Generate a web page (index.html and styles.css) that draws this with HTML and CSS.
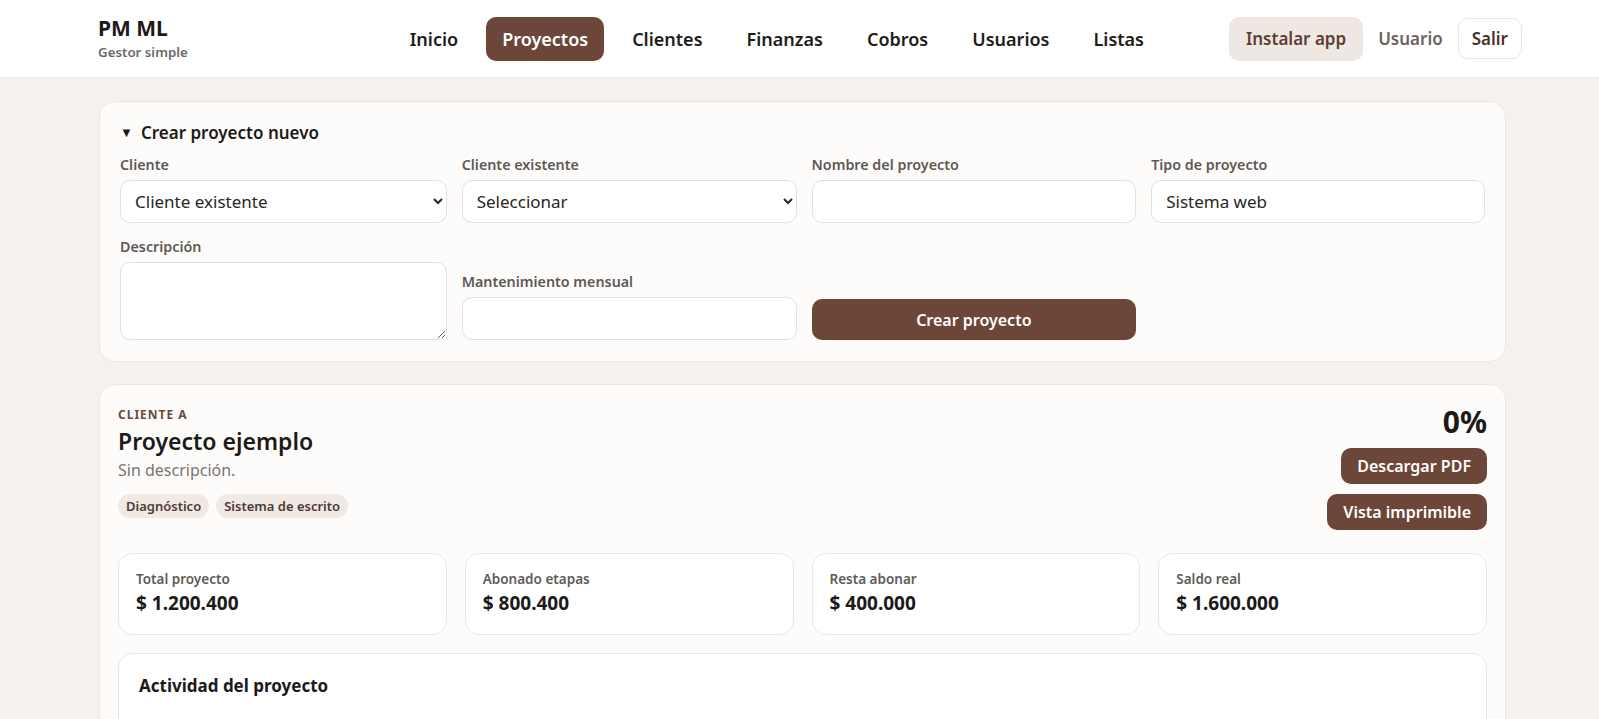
FILE: index.html
```html
<!DOCTYPE html>
<html lang="es">
<head>
  <meta charset="utf-8">
  <title>PM ML - Proyectos</title>
  <link rel="stylesheet" href="styles.css">
</head>
<body>
  <header class="topbar">
    <div class="brand">
      <div class="brand-name">PM ML</div>
      <div class="brand-sub">Gestor simple</div>
    </div>
    <nav class="nav">
      <a class="nav-link" href="#">Inicio</a>
      <a class="nav-link active" href="#">Proyectos</a>
      <a class="nav-link" href="#">Clientes</a>
      <a class="nav-link" href="#">Finanzas</a>
      <a class="nav-link" href="#">Cobros</a>
      <a class="nav-link" href="#">Usuarios</a>
      <a class="nav-link" href="#">Listas</a>
    </nav>
    <div class="user-area">
      <button class="install-btn">Instalar app</button>
      <span class="user-name">Usuario</span>
      <button class="logout-btn">Salir</button>
    </div>
  </header>

  <main class="page">
    <section class="card">
      <details class="new-project" open>
        <summary>Crear proyecto nuevo</summary>
        <form class="form-grid">
          <label class="field">
            <span class="field-label">Cliente</span>
            <select class="input">
              <option>Cliente existente</option>
            </select>
          </label>
          <label class="field">
            <span class="field-label">Cliente existente</span>
            <select class="input">
              <option>Seleccionar</option>
            </select>
          </label>
          <label class="field">
            <span class="field-label">Nombre del proyecto</span>
            <input class="input" type="text">
          </label>
          <label class="field">
            <span class="field-label">Tipo de proyecto</span>
            <input class="input" type="text" value="Sistema web">
          </label>
          <label class="field">
            <span class="field-label">Descripción</span>
            <textarea class="input textarea"></textarea>
          </label>
          <label class="field">
            <span class="field-label">Mantenimiento mensual</span>
            <input class="input" type="text">
          </label>
          <div class="field">
            <button type="button" class="primary-btn wide">Crear proyecto</button>
          </div>
        </form>
      </details>
    </section>

    <section class="card project">
      <div class="project-head">
        <div class="project-info">
          <div class="project-client">CLIENTE A</div>
          <h2 class="project-title">Proyecto ejemplo</h2>
          <p class="project-desc">Sin descripción.</p>
          <div class="tags">
            <span class="tag">Diagnóstico</span>
            <span class="tag">Sistema de escrito</span>
          </div>
        </div>
        <div class="project-actions">
          <div class="progress">0%</div>
          <button class="primary-btn small">Descargar PDF</button>
          <button class="primary-btn small">Vista imprimible</button>
        </div>
      </div>

      <div class="stats">
        <div class="stat">
          <div class="stat-label">Total proyecto</div>
          <div class="stat-value">$ 1.200.400</div>
        </div>
        <div class="stat">
          <div class="stat-label">Abonado etapas</div>
          <div class="stat-value">$ 800.400</div>
        </div>
        <div class="stat">
          <div class="stat-label">Resta abonar</div>
          <div class="stat-value">$ 400.000</div>
        </div>
        <div class="stat">
          <div class="stat-label">Saldo real</div>
          <div class="stat-value">$ 1.600.000</div>
        </div>
      </div>

      <div class="activity">
        <h3 class="activity-title">Actividad del proyecto</h3>
      </div>
    </section>
  </main>
</body>
</html>
```

FILE: styles.css
```css
* {
  box-sizing: border-box;
}

body {
  margin: 0;
  background-color: #f5f2ee;
  font-family: "Noto Sans", "Open Sans", sans-serif;
  color: #1c1a19;
  height: 100vh;
  overflow: hidden;
}

.topbar {
  display: flex;
  align-items: center;
  height: 78px;
  padding: 0 77px 0 98px;
  background-color: #fff;
  border-bottom: 1px solid #ebe6e1;
}

.brand-name {
  font-size: 21px;
  font-weight: 700;
  line-height: 25px;
}

.brand-sub {
  font-size: 13.3px;
  font-weight: 600;
  color: #6d6864;
  margin-top: 2px;
}

.nav {
  display: flex;
  gap: 12px;
  margin-left: auto;
}

.nav-link {
  display: flex;
  align-items: center;
  height: 44px;
  padding: 0 16px;
  border-radius: 10px;
  font-size: 18px;
  font-weight: 600;
  color: #1f1c1a;
  text-decoration: none;
}

.nav-link.active {
  background-color: #6c4638;
  color: #fff;
}

.user-area {
  display: flex;
  align-items: center;
  gap: 15px;
  margin-left: 69px;
}

.install-btn {
  height: 44px;
  padding: 0 17px;
  border: none;
  border-radius: 10px;
  background-color: #efe7e1;
  color: #5c3f33;
  font-family: inherit;
  font-size: 17px;
  font-weight: 600;
}

.user-name {
  font-size: 17px;
  font-weight: 600;
  color: #6e625d;
}

.logout-btn {
  height: 41px;
  padding: 0 13px;
  border: 1px solid #e9e4df;
  border-radius: 10px;
  background-color: #fff;
  color: #4a3129;
  font-family: inherit;
  font-size: 17px;
  font-weight: 600;
}

.page {
  padding: 23px 93px 0 99px;
}

.card {
  background-color: #fdfcfb;
  border: 1px solid #ece7e2;
  border-radius: 16px;
  padding: 20px 20px 21px;
  margin-bottom: 22px;
}

.new-project summary {
  font-size: 17px;
  font-weight: 600;
  line-height: 22px;
  cursor: pointer;
  list-style: none;
}

.new-project summary::before {
  content: "\25BC";
  font-size: 13px;
  margin-right: 8px;
  position: relative;
  top: -2px;
}

.form-grid {
  display: grid;
  grid-template-columns: 320fr 328fr 318fr 327fr;
  column-gap: 15px;
  row-gap: 14px;
  align-items: end;
  margin-top: 10px;
}

.field {
  display: flex;
  flex-direction: column;
}

.field-label {
  font-size: 14.3px;
  font-weight: 600;
  color: #5f5955;
  margin-bottom: 6px;
}

.input {
  height: 43px;
  padding: 0 14px;
  border: 1px solid #e5e0db;
  border-radius: 10px;
  background-color: #fff;
  font-family: inherit;
  font-size: 17px;
  color: #2a2624;
}

select.input {
  padding: 0 10px;
}

.textarea {
  height: 78px;
  resize: vertical;
}

.primary-btn {
  border: none;
  border-radius: 10px;
  background-color: #6c4638;
  color: #fff;
  font-family: inherit;
  font-weight: 600;
  cursor: pointer;
}

.primary-btn.wide {
  height: 41px;
  font-size: 16px;
}

.primary-btn.small {
  height: 36px;
  padding: 0 16px;
  font-size: 16px;
}

.project {
  padding: 19px 18px 0;
  margin-bottom: 0;
}

.project-head {
  display: flex;
  justify-content: space-between;
}

.project-client {
  font-size: 12px;
  font-weight: 700;
  letter-spacing: 1px;
  color: #6a4a3f;
  margin-top: 2px;
}

.project-title {
  margin: 2px 0 0;
  font-size: 23px;
  font-weight: 600;
}

.project-desc {
  margin: 2px 0 0;
  font-size: 16px;
  color: #7a7470;
}

.tags {
  display: flex;
  gap: 7px;
  margin-top: 13px;
}

.tag {
  padding: 3px 8px;
  border-radius: 12px;
  background-color: #f1e9e4;
  color: #4d3a33;
  font-size: 13px;
  font-weight: 600;
}

.project-actions {
  display: flex;
  flex-direction: column;
  align-items: flex-end;
  gap: 10px;
}

.progress {
  font-size: 30px;
  font-weight: 700;
  line-height: 36px;
  margin-bottom: -2px;
}

.stats {
  display: grid;
  grid-template-columns: repeat(4, 1fr);
  gap: 18px;
  margin-top: 23px;
}

.stat {
  height: 82px;
  padding: 16px 17px 0;
  background-color: #fff;
  border: 1px solid #ece7e2;
  border-radius: 14px;
}

.stat-label {
  font-size: 13.5px;
  font-weight: 600;
  color: #615b57;
}

.stat-value {
  margin-top: 2px;
  font-size: 19px;
  font-weight: 700;
}

.activity {
  margin-top: 18px;
  padding: 20px 20px;
  height: 120px;
  background-color: #fff;
  border: 1px solid #ece7e2;
  border-radius: 14px;
}

.activity-title {
  margin: 0;
  font-size: 17px;
  font-weight: 700;
}
```
